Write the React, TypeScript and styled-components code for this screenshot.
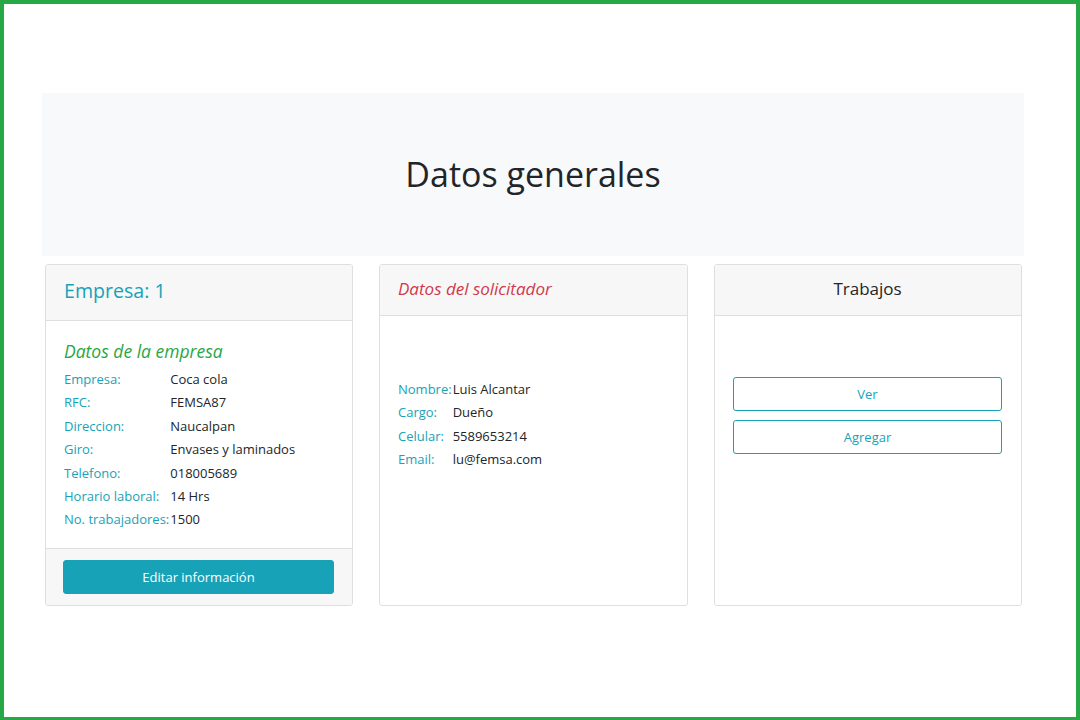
import React from 'react'
import styled, { createGlobalStyle } from 'styled-components'

const GlobalStyle = createGlobalStyle`
  html, body {
    margin: 0;
    padding: 0;
    background: #ffffff;
  }
  body {
    font-family: 'Open Sans', 'Noto Sans', sans-serif;
    color: #212529;
  }
  * {
    box-sizing: border-box;
  }
`

const empresa = [
  ['Empresa:', 'Coca cola'],
  ['RFC:', 'FEMSA87'],
  ['Direccion:', 'Naucalpan'],
  ['Giro:', 'Envases y laminados'],
  ['Telefono:', '018005689'],
  ['Horario laboral:', '14 Hrs'],
  ['No. trabajadores:', '1500'],
]

const solicitador = [
  ['Nombre:', 'Luis Alcantar'],
  ['Cargo:', 'Dueño'],
  ['Celular:', '5589653214'],
  ['Email:', 'lu@femsa.com'],
]

const App = () => {
  return (
    <>
      <GlobalStyle />
      <Frame>
        <Container>
          <Jumbotron>
            <PageTitle>Datos generales</PageTitle>
          </Jumbotron>
          <CardRow>
            <Card>
              <CardHeader tall>
                <CompanyTitle>Empresa: 1</CompanyTitle>
              </CardHeader>
              <CardBody top={19}>
                <SectionTitle>Datos de la empresa</SectionTitle>
                <InfoGrid>
                  {empresa.map(([label, value]) => (
                    <React.Fragment key={label}>
                      <Label>{label}</Label>
                      <Value>{value}</Value>
                    </React.Fragment>
                  ))}
                </InfoGrid>
              </CardBody>
              <CardFooter>
                <SolidButton>Editar información</SolidButton>
              </CardFooter>
            </Card>

            <Card>
              <CardHeader>
                <RequesterTitle>Datos del solicitador</RequesterTitle>
              </CardHeader>
              <CardBody top={62}>
                <InfoGrid>
                  {solicitador.map(([label, value]) => (
                    <React.Fragment key={label}>
                      <Label>{label}</Label>
                      <Value>{value}</Value>
                    </React.Fragment>
                  ))}
                </InfoGrid>
              </CardBody>
            </Card>

            <Card>
              <CardHeader center>
                <JobsTitle>Trabajos</JobsTitle>
              </CardHeader>
              <CardBody top={61}>
                <ButtonStack>
                  <OutlineButton>Ver</OutlineButton>
                  <OutlineButton>Agregar</OutlineButton>
                </ButtonStack>
              </CardBody>
            </Card>
          </CardRow>
        </Container>
      </Frame>
    </>
  )
}

const Frame = styled.div`
  height: 720px;
  border: 4px solid #28a745;
  border-bottom-width: 3px;
  overflow: hidden;
`

const Container = styled.div`
  width: 982px;
  margin: 89px 0 0 38px;
`

const Jumbotron = styled.div`
  height: 163px;
  background: #f8f9fa;
  display: flex;
  align-items: center;
  justify-content: center;
`

const PageTitle = styled.h1`
  margin: 0;
  font-size: 34px;
  font-weight: 400;
  line-height: 1.2;
  color: #212529;
`

const CardRow = styled.div`
  display: grid;
  grid-template-columns: 308px 309px 308px;
  column-gap: 26px;
  padding: 0 3px;
  margin-top: 8px;
`

const Card = styled.div`
  height: 342px;
  display: flex;
  flex-direction: column;
  border: 1px solid #dfdfdf;
  border-radius: 3px;
  background: #ffffff;
  overflow: hidden;
`

interface IHeaderProps {
  tall?: boolean
  center?: boolean
}

const CardHeader = styled.div<IHeaderProps>`
  height: ${(props) => (props.tall ? '56px' : '51px')};
  flex-shrink: 0;
  display: flex;
  align-items: center;
  justify-content: ${(props) => (props.center ? 'center' : 'flex-start')};
  padding: 0 19px 4px 18px;
  background: #f7f7f7;
  border-bottom: 1px solid #dfdfdf;
`

const CompanyTitle = styled.h4`
  margin: 0;
  font-size: 19.6px;
  font-weight: 400;
  color: #17a2b8;
`

const RequesterTitle = styled.h5`
  margin: 0;
  font-size: 17px;
  font-weight: 400;
  font-style: italic;
  color: #d03a4a;
`

const JobsTitle = styled.h5`
  margin: 0;
  font-size: 17px;
  font-weight: 400;
  color: #212529;
`

interface IBodyProps {
  top: number
}

const CardBody = styled.div<IBodyProps>`
  flex: 1;
  padding: ${(props) => `${props.top}px 19px 16px 18px`};
`

const SectionTitle = styled.h5`
  margin: 0 0 6px;
  font-size: 17.5px;
  line-height: 22px;
  font-weight: 400;
  font-style: italic;
  color: #28a745;
`

const InfoGrid = styled.div`
  display: grid;
  grid-template-columns: max-content 1fr;
  column-gap: 1px;
  font-size: 13px;
  line-height: 23.4px;
`

const Label = styled.span`
  color: #17a2b8;
`

const Value = styled.span`
  color: #212529;
`

const CardFooter = styled.div`
  flex-shrink: 0;
  height: 57px;
  padding: 11px 18px 0 17px;
  background: #f7f7f7;
  border-top: 1px solid #dfdfdf;
`

const SolidButton = styled.button`
  width: 100%;
  height: 34px;
  border: 1px solid #17a2b8;
  border-radius: 3px;
  background: #17a2b8;
  color: #ffffff;
  font-family: inherit;
  font-size: 13px;
`

const ButtonStack = styled.div`
  display: flex;
  flex-direction: column;
  gap: 9px;
`

const OutlineButton = styled.button`
  width: 100%;
  height: 34px;
  border: 1px solid #17a2b8;
  border-radius: 3px;
  background: #ffffff;
  color: #17a2b8;
  font-family: inherit;
  font-size: 13px;
`

export default App
